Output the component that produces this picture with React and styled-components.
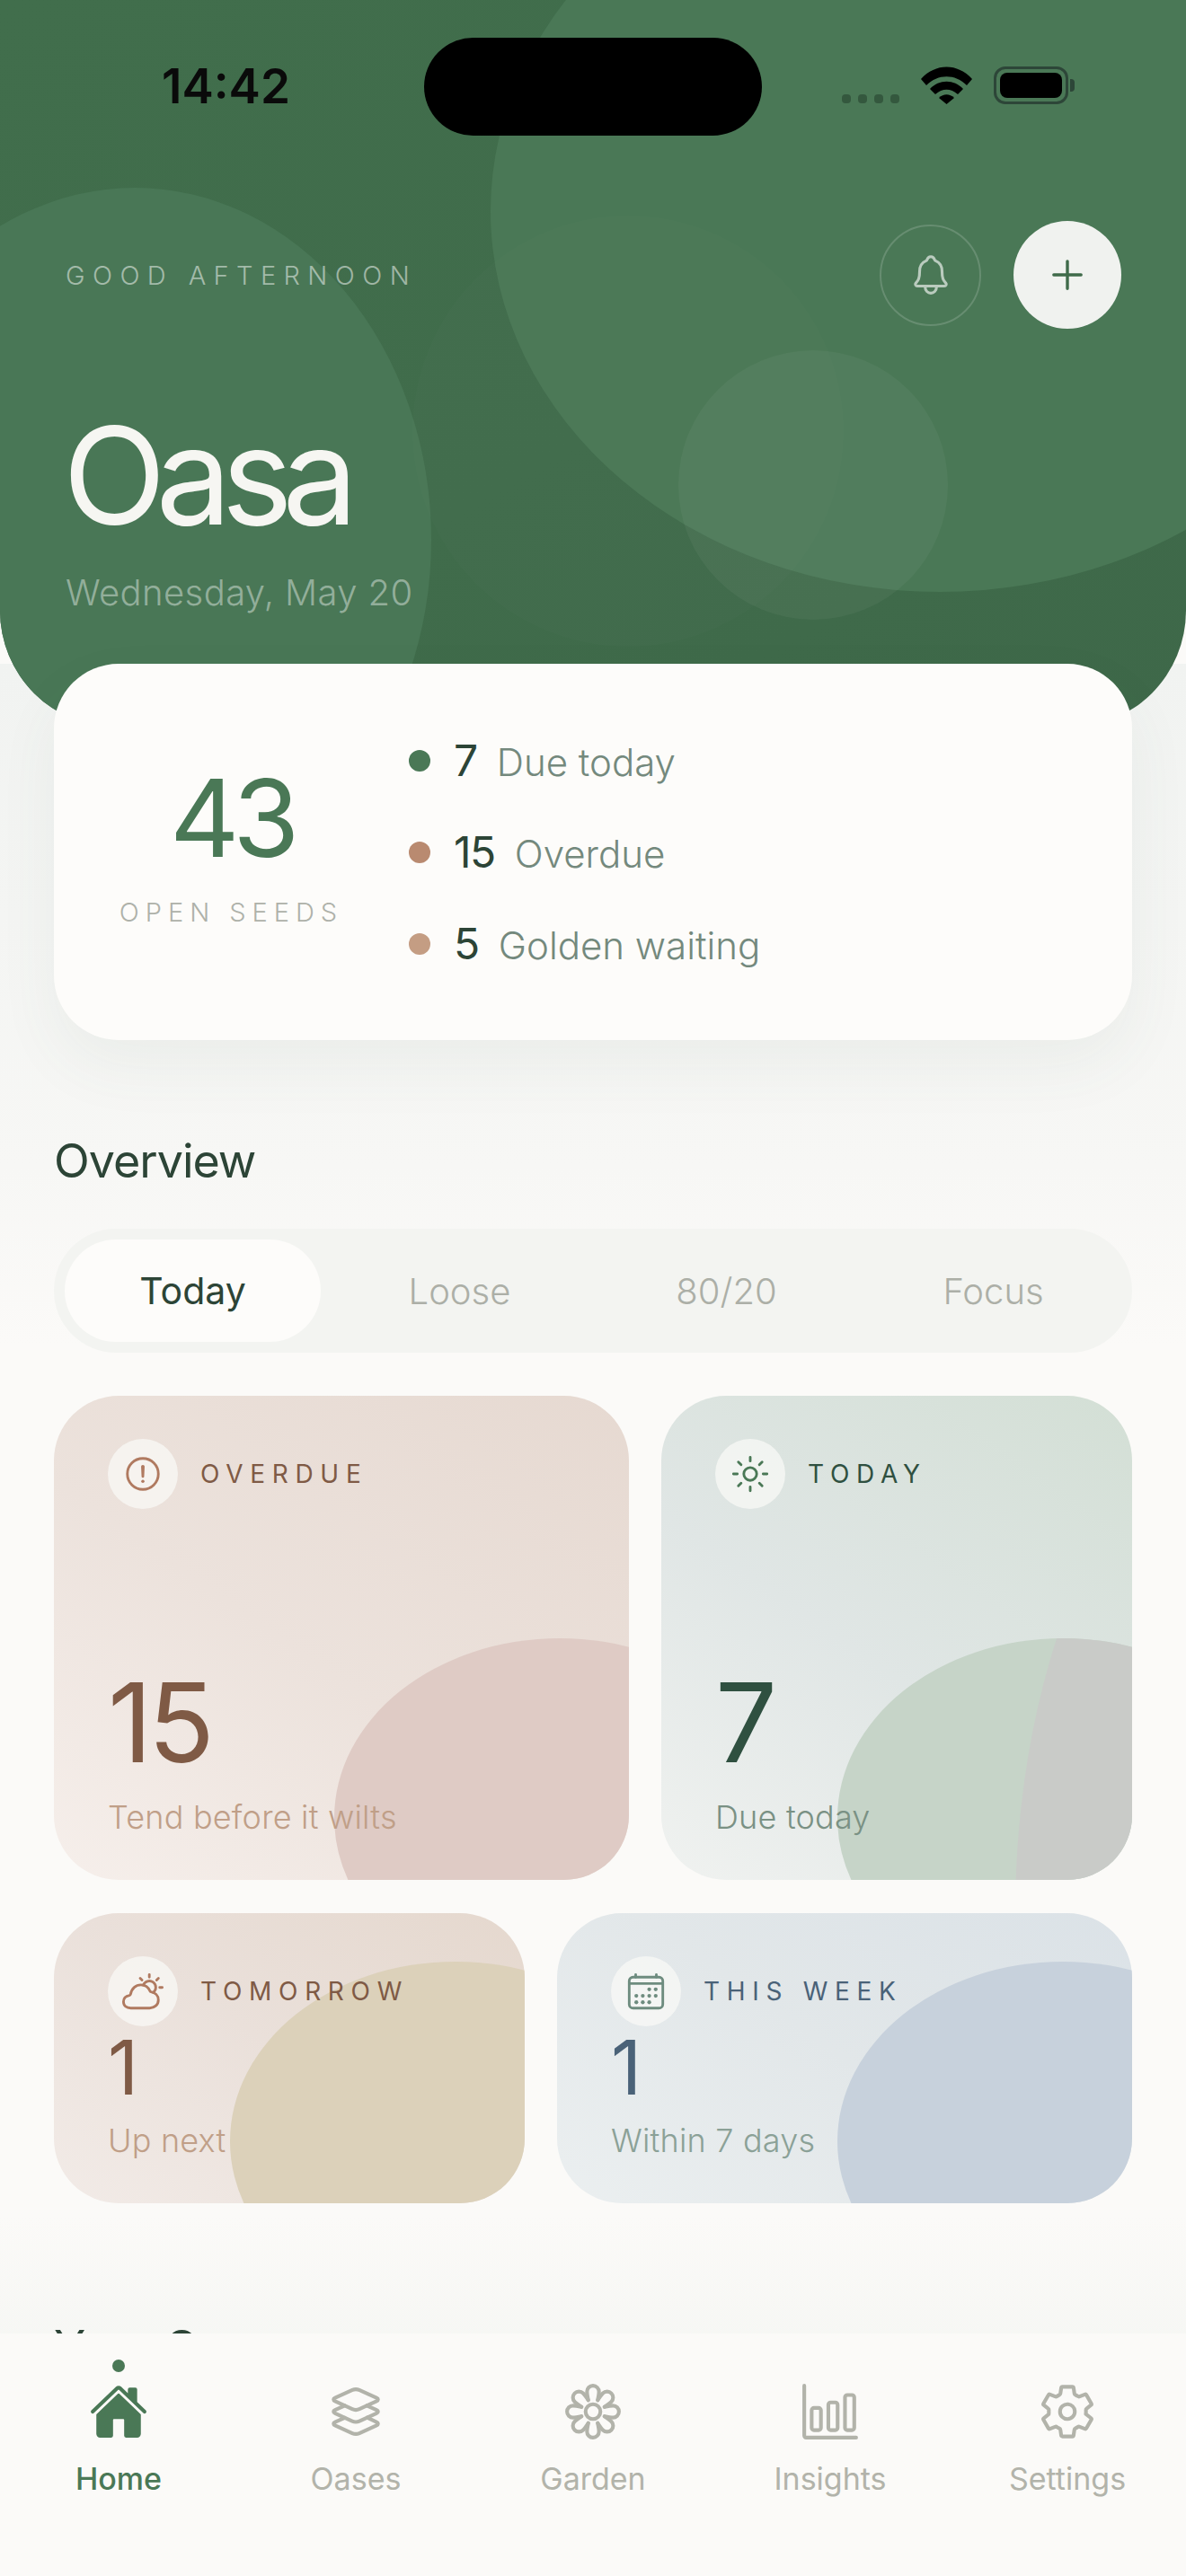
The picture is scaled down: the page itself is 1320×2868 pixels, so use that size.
import React from 'react';
import styled, { createGlobalStyle } from 'styled-components';
import {
  IoAddOutline,
  IoAlertCircleOutline,
  IoBarChartOutline,
  IoCalendarOutline,
  IoFlowerOutline,
  IoHome,
  IoLayersOutline,
  IoNotificationsOutline,
  IoPartlySunnyOutline,
  IoSettingsOutline,
  IoSunnyOutline,
} from 'react-icons/io5';

const GlobalStyle = createGlobalStyle`
  html, body {
    margin: 0;
    padding: 0;
    background: #fbfaf8;
  }
  * {
    box-sizing: border-box;
  }
`;

const Screen = styled.div`
  width: 1320px;
  height: 2868px;
  display: flex;
  flex-direction: column;
  overflow: hidden;
  background: #fbfaf8;
  font-family: Inter, "Liberation Sans", sans-serif;
`;

const Scroll = styled.div`
  position: relative;
  flex: 1;
  min-height: 0;
  overflow: hidden;
  &::after {
    content: '';
    position: absolute;
    left: 0;
    right: 0;
    bottom: 0;
    height: 130px;
    background: linear-gradient(rgba(245, 246, 243, 0), rgba(245, 246, 243, 0.75));
    pointer-events: none;
  }
`;

const Hero = styled.header`
  position: relative;
  height: 810px;
  overflow: hidden;
  border-radius: 0 0 130px 130px;
  background: linear-gradient(150deg, #416e4c 0%, #406c4b 55%, #3e6849 100%);
`;

const Blob = styled.div`
  position: absolute;
  left: ${p => p.$x}px;
  top: ${p => p.$y}px;
  width: ${p => p.$w}px;
  height: ${p => p.$h}px;
  border-radius: 50%;
  background: ${p => p.$color};
`;

const HeroInner = styled.div`
  position: relative;
  z-index: 1;
`;

const StatusBar = styled.div`
  display: flex;
  align-items: center;
  justify-content: space-between;
  height: 109px;
  margin-top: 42px;
  padding: 0 122px 0 180px;
`;

const Clock = styled.div`
  width: 292px;
  font-size: 53px;
  font-weight: 600;
  color: #0a0a0a;
  line-height: 1;
`;

const Island = styled.div`
  width: 376px;
  height: 109px;
  border-radius: 55px;
  background: #000;
`;

const StatusIcons = styled.div`
  display: flex;
  align-items: flex-start;
  width: 261px;
  height: 42px;
  margin-top: -4px;
  margin-left: auto;
`;

const SignalDots = styled.div`
  display: flex;
  gap: 8px;
  margin-top: 31px;
  margin-right: 24px;
`;

const SignalDot = styled.span`
  width: 10px;
  height: 10px;
  border-radius: 4px;
  background: rgba(20, 40, 28, 0.4);
`;

const Battery = styled.div`
  position: relative;
  width: 83px;
  height: 42px;
  margin-left: 24px;
  padding: 4px;
  border: 3px solid #2d4638;
  border-radius: 13px;
  &::after {
    content: '';
    position: absolute;
    right: -10px;
    top: 11px;
    width: 5px;
    height: 14px;
    border-radius: 0 4px 4px 0;
    background: #2d4638;
  }
`;

const BatteryFill = styled.div`
  height: 100%;
  border-radius: 8px;
  background: #000;
`;

const TopRow = styled.div`
  display: flex;
  align-items: center;
  justify-content: space-between;
  margin-top: 95px;
  padding: 0 72px 0 73px;
`;

const Greeting = styled.div`
  font-size: 29px;
  font-weight: 300;
  letter-spacing: 0.29em;
  color: rgba(255, 255, 255, 0.5);
`;

const TopActions = styled.div`
  display: flex;
  align-items: center;
  gap: 36px;
`;

const BellButton = styled.button`
  display: flex;
  align-items: center;
  justify-content: center;
  width: 113px;
  height: 113px;
  padding: 0;
  border: 2px solid rgba(255, 255, 255, 0.16);
  border-radius: 50%;
  background: transparent;
  color: rgba(255, 255, 255, 0.62);
  font-size: 50px;
`;

const AddButton = styled.button`
  display: flex;
  align-items: center;
  justify-content: center;
  width: 120px;
  height: 120px;
  padding: 0;
  border: 0;
  border-radius: 50%;
  background: #f0f2ef;
  color: #3f6b4a;
  font-size: 54px;
`;

const Title = styled.h1`
  margin: 84px 0 0;
  padding-left: 70px;
  font-size: 150px;
  font-weight: 400;
  line-height: 160px;
  letter-spacing: -0.075em;
  color: #f6f6f2;
`;

const HeroDate = styled.div`
  margin-top: 25px;
  padding-left: 73px;
  font-size: 40px;
  font-weight: 300;
  line-height: 50px;
  letter-spacing: 0.4px;
  color: rgba(255, 255, 255, 0.42);
`;

const Body = styled.main`
  padding: 0 60px;
  background: linear-gradient(#f1f3f1 0, #f7f7f5 560px, #fbfaf8 760px);
`;

const SummaryCard = styled.section`
  position: relative;
  z-index: 2;
  display: flex;
  align-items: center;
  height: 419px;
  margin-top: -71px;
  border-radius: 72px;
  background: #fdfcfa;
  box-shadow: 0 30px 70px rgba(70, 100, 85, 0.06);
`;

const SummaryTotal = styled.div`
  display: flex;
  flex-direction: column;
  align-items: center;
  flex: 0 0 395px;
  margin-top: -14px;
`;

const TotalNumber = styled.div`
  margin-top: -5px;
  font-size: 120px;
  font-weight: 400;
  line-height: 130px;
  letter-spacing: -0.06em;
  color: #4a7856;
`;

const TotalLabel = styled.div`
  margin-top: 22px;
  font-size: 29px;
  font-weight: 300;
  letter-spacing: 0.24em;
  color: #aeb1a9;
`;

const SummaryList = styled.ul`
  display: flex;
  flex-direction: column;
  gap: 50px;
  margin: 0;
  padding: 0;
  list-style: none;
`;

const SummaryRow = styled.li`
  display: flex;
  align-items: center;
  height: 52px;
`;

const RowDot = styled.span`
  width: 24px;
  height: 24px;
  margin-right: 26px;
  border-radius: 50%;
  background: ${p => p.$color};
`;

const RowText = styled.span`
  display: flex;
  align-items: baseline;
`;

const RowNumber = styled.span`
  margin-right: 22px;
  font-size: 48px;
  font-weight: 400;
  letter-spacing: -0.03em;
  color: #2c4436;
`;

const RowLabel = styled.span`
  font-size: 42px;
  font-weight: 300;
  color: #74897d;
`;

const SectionTitle = styled.h2`
  position: relative;
  z-index: 1;
  margin: ${p => p.$top}px 0 0;
  font-size: 52px;
  font-weight: 400;
  line-height: 60px;
  letter-spacing: -1px;
  color: #2c4436;
`;

const Segments = styled.div`
  display: grid;
  grid-template-columns: repeat(4, 1fr);
  gap: 12px;
  height: 138px;
  margin-top: 45px;
  padding: 12px;
  border-radius: 69px;
  background: #f3f4f1;
`;

const Segment = styled.div`
  display: flex;
  align-items: center;
  justify-content: center;
  border-radius: 57px;
  font-size: ${p => (p.$active ? 41 : 40)}px;
  font-weight: ${p => (p.$active ? 400 : 300)};
  color: ${p => (p.$active ? '#2c4436' : '#acafa7')};
  background: ${p => (p.$active ? '#fdfcfa' : 'transparent')};
`;

const CardRow = styled.div`
  display: grid;
  grid-template-columns: ${p => p.$columns};
  gap: 36px;
  margin-top: ${p => p.$top}px;
`;

const StatCard = styled.article`
  position: relative;
  display: flex;
  flex-direction: column;
  height: ${p => p.$height}px;
  padding: 48px 60px;
  overflow: hidden;
  border-radius: 72px;
  background: ${p => p.$bg};
`;

const CardBlob = styled.div`
  position: absolute;
  right: -174px;
  top: ${p => p.$top}px;
  width: 502px;
  height: 400px;
  overflow: hidden;
  border-radius: 50%;
  background: ${p => p.$color};
`;

const BlobPatch = styled.div`
  position: absolute;
  left: 198px;
  top: -294px;
  width: 660px;
  height: 1200px;
  border-radius: 50%;
  background: #c9cbc8;
`;

const CardHead = styled.div`
  position: relative;
  display: flex;
  align-items: center;
  gap: 25px;
`;

const IconBubble = styled.span`
  display: flex;
  align-items: center;
  justify-content: center;
  width: 78px;
  height: 78px;
  border-radius: 50%;
  background: rgba(250, 250, 247, 0.72);
  color: ${p => p.$color};
  font-size: 46px;
`;

const CardLabel = styled.span`
  font-size: 28px;
  font-weight: 400;
  letter-spacing: 0.275em;
  color: ${p => p.$color};
`;

const CardNumber = styled.div`
  position: relative;
  margin-top: auto;
  font-size: ${p => p.$size}px;
  font-weight: 400;
  line-height: ${p => p.$size}px;
  letter-spacing: -0.04em;
  color: ${p => p.$color};
`;

const CardSub = styled.div`
  position: relative;
  margin-top: ${p => p.$gap}px;
  font-size: 36px;
  font-weight: 300;
  line-height: 44px;
  letter-spacing: 0.2px;
  color: ${p => p.$color};
`;

const TabBar = styled.nav`
  display: grid;
  grid-template-columns: repeat(5, 1fr);
  height: 270px;
  padding-top: 29px;
  background: #fbfaf8;
`;

const Tab = styled.div`
  display: flex;
  flex-direction: column;
  align-items: center;
  color: ${p => (p.$active ? '#4a7856' : '#b2b3aa')};
`;

const TabDot = styled.span`
  width: 14px;
  height: 14px;
  border-radius: 50%;
  background: ${p => (p.$active ? '#4a7856' : 'transparent')};
`;

const TabIcon = styled.span`
  display: flex;
  align-items: center;
  justify-content: center;
  height: 70px;
  margin-top: 9px;
  font-size: 66px;
`;

const TabLabel = styled.span`
  margin-top: 20px;
  font-size: 34px;
  font-weight: ${p => (p.$active ? 500 : 400)};
  line-height: 40px;
`;

const WifiIcon = () => (
  <svg width="57" height="42" viewBox="0 0 57 42">
    <path fill="#000" d="M0 14 C16 -4 41 -4 57 14 L51 21 C38 8 19 8 6 21 Z" />
    <path fill="#000" d="M10 25 C20 14 37 14 47 25 L41 31 C33 24 24 24 16 31 Z" />
    <path fill="#000" d="M20 35 C25 30 32 30 37 35 L28.5 42 Z" />
  </svg>
);

const summaryRows = [
  { color: '#4a7856', value: '7', label: 'Due today' },
  { color: '#b98a70', value: '15', label: 'Overdue' },
  { color: '#c49d83', value: '5', label: 'Golden waiting' },
];

const segments = ['Today', 'Loose', '80/20', 'Focus'];

const tabs = [
  { label: 'Home', icon: <IoHome />, active: true },
  { label: 'Oases', icon: <IoLayersOutline /> },
  { label: 'Garden', icon: <IoFlowerOutline /> },
  { label: 'Insights', icon: <IoBarChartOutline /> },
  { label: 'Settings', icon: <IoSettingsOutline /> },
];

const brown = '#7f5a45';

const Stat = ({ bg, blob, blobTop, patch, icon, iconColor, label, labelColor, value, size, sub, subColor, height, gap }) => (
  <StatCard $bg={bg} $height={height}>
    <CardBlob $color={blob} $top={blobTop}>{patch && <BlobPatch />}</CardBlob>
    <CardHead>
      <IconBubble $color={iconColor}>{icon}</IconBubble>
      <CardLabel $color={labelColor}>{label}</CardLabel>
    </CardHead>
    <CardNumber $size={size} $color={labelColor}>{value}</CardNumber>
    <CardSub $gap={gap} $color={subColor}>{sub}</CardSub>
  </StatCard>
);

export default function App() {
  return (
    <Screen>
      <GlobalStyle />
      <Scroll>
        <Hero>
          <Blob $x={546} $y={-189} $w={1000} $h={848} $color="#4a7856" />
          <Blob $x={-180} $y={209} $w={660} $h={784} $color="#497756" />
          <Blob $x={459} $y={240} $w={480} $h={480} $color="rgba(255, 255, 255, 0.012)" />
          <Blob $x={755} $y={390} $w={300} $h={300} $color="rgba(255, 255, 255, 0.045)" />
          <HeroInner>
            <StatusBar>
              <Clock>14:42</Clock>
              <Island />
              <StatusIcons>
                <SignalDots>
                  <SignalDot />
                  <SignalDot />
                  <SignalDot />
                  <SignalDot />
                </SignalDots>
                <WifiIcon />
                <Battery><BatteryFill /></Battery>
              </StatusIcons>
            </StatusBar>
            <TopRow>
              <Greeting>GOOD AFTERNOON</Greeting>
              <TopActions>
                <BellButton><IoNotificationsOutline /></BellButton>
                <AddButton><IoAddOutline /></AddButton>
              </TopActions>
            </TopRow>
            <Title>Oasa</Title>
            <HeroDate>Wednesday, May 20</HeroDate>
          </HeroInner>
        </Hero>
        <Body>
          <SummaryCard>
            <SummaryTotal>
              <TotalNumber>43</TotalNumber>
              <TotalLabel>OPEN SEEDS</TotalLabel>
            </SummaryTotal>
            <SummaryList>
              {summaryRows.map(row => (
                <SummaryRow key={row.label}>
                  <RowDot $color={row.color} />
                  <RowText>
                    <RowNumber>{row.value}</RowNumber>
                    <RowLabel>{row.label}</RowLabel>
                  </RowText>
                </SummaryRow>
              ))}
            </SummaryList>
          </SummaryCard>

          <SectionTitle $top={105}>Overview</SectionTitle>
          <Segments>
            {segments.map((name, i) => (
              <Segment key={name} $active={i === 0}>{name}</Segment>
            ))}
          </Segments>

          <CardRow $columns="640px 524px" $top={48}>
            <Stat
              height={539}
              bg="linear-gradient(35deg, #f6efeb 0%, #ece2dc 45%, #e6d9d1 100%)"
              blob="#dfcbc5"
              blobTop={270}
              icon={<IoAlertCircleOutline />}
              iconColor="#b07a60"
              label="OVERDUE"
              labelColor={brown}
              value="15"
              size={122}
              gap={22}
              sub="Tend before it wilts"
              subColor="#c09f88"
            />
            <Stat
              height={539}
              bg="linear-gradient(35deg, #f0f2f0 0%, #e0e6e5 45%, #d3dfd5 100%)"
              blob="#c6d4c8"
              blobTop={270}
              patch
              icon={<IoSunnyOutline />}
              iconColor="#4a7856"
              label="TODAY"
              labelColor="#2f5040"
              value="7"
              size={122}
              gap={22}
              sub="Due today"
              subColor="#7a9184"
            />
          </CardRow>
          <CardRow $columns="524px 640px" $top={37}>
            <Stat
              height={323}
              bg="linear-gradient(35deg, #f2ebe7 0%, #eae0da 50%, #e5d8ce 100%)"
              blob="#dcd1ba"
              blobTop={54}
              icon={<IoPartlySunnyOutline />}
              iconColor="#b07a60"
              label="TOMORROW"
              labelColor={brown}
              value="1"
              size={84}
              gap={17}
              sub="Up next"
              subColor="#c09f88"
            />
            <Stat
              height={323}
              bg="linear-gradient(35deg, #ebeff0 0%, #e2e7e9 50%, #dbe2e7 100%)"
              blob="#c7d1dc"
              blobTop={54}
              icon={<IoCalendarOutline />}
              iconColor="#6e8c7f"
              label="THIS WEEK"
              labelColor="#4a6278"
              value="1"
              size={84}
              gap={17}
              sub="Within 7 days"
              subColor="#8ba197"
            />
          </CardRow>

          <SectionTitle $top={131}>Your Oases</SectionTitle>
        </Body>
      </Scroll>
      <TabBar>
        {tabs.map(tab => (
          <Tab key={tab.label} $active={tab.active}>
            <TabDot $active={tab.active} />
            <TabIcon>{tab.icon}</TabIcon>
            <TabLabel $active={tab.active}>{tab.label}</TabLabel>
          </Tab>
        ))}
      </TabBar>
    </Screen>
  );
}
